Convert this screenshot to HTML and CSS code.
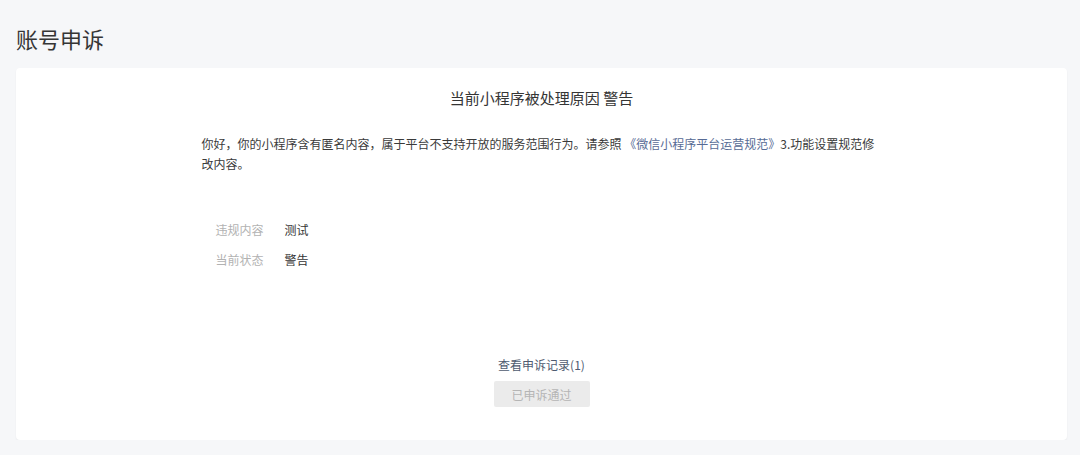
FILE: index.html
```html
<!DOCTYPE html>
<html lang="zh-CN">

<head>
  <meta charset="UTF-8">
  <meta name="viewport" content="width=device-width, initial-scale=1.0">
  <title>账号申诉</title>
  <link rel="stylesheet" href="styles.css">
</head>

<body>
  <div class="page">
    <h1 class="page-title">账号申诉</h1>

    <div class="appeal-card">
      <h2 class="appeal-reason">当前小程序被处理原因 警告</h2>

      <div class="appeal-content">
        <p class="appeal-desc">你好，你的小程序含有匿名内容，属于平台不支持开放的服务范围行为。请参照 <a href="#" class="link">《微信小程序平台运营规范》</a>3.功能设置规范修改内容。</p>

        <div class="info-list">
          <div class="info-row">
            <span class="info-label">违规内容</span>
            <span class="info-value">测试</span>
          </div>
          <div class="info-row">
            <span class="info-label">当前状态</span>
            <span class="info-value">警告</span>
          </div>
        </div>
      </div>

      <!-- Appeal actions -->
      <div class="appeal-actions">
        <a href="#" class="record-link">查看申诉记录(1)</a>
        <button class="btn-disabled" disabled>已申诉通过</button>
      </div>
    </div>
  </div>
</body>

</html>
```

FILE: styles.css
```css
/* General body styling */
body {
  margin: 0;
  padding: 0;
  background-color: #f6f7f9;
  font-family: "Noto Sans CJK SC", "Noto Sans", sans-serif;
  color: #353535;
}

.page {
  padding: 23px 13px 0 16px;
}

.page-title {
  margin: 0;
  font-size: 22px;
  font-weight: normal;
  line-height: 30px;
}

/* Card */
.appeal-card {
  margin-top: 15px;
  background-color: #fff;
  border-radius: 4px;
  box-shadow: 0 1px 2px rgba(0, 0, 0, 0.06);
  padding: 20px 0 33px;
}

.appeal-reason {
  margin: 0;
  font-size: 15px;
  font-weight: normal;
  line-height: 20px;
  text-align: center;
}

.appeal-content {
  width: 680px;
  margin: 26px auto 0;
}

.appeal-desc {
  margin: 0;
  font-size: 12px;
  line-height: 20px;
  color: #3a3a3a;
}

.link {
  color: #576b95;
  text-decoration: none;
}

/* Info rows */
.info-list {
  display: flex;
  flex-direction: column;
  gap: 10px;
  margin-top: 46px;
  padding-left: 14px;
}

.info-row {
  display: flex;
  font-size: 12px;
  line-height: 20px;
}

.info-label {
  width: 69px;
  color: #b2b2b2;
}

.info-value {
  color: #353535;
}

/* Actions */
.appeal-actions {
  display: flex;
  flex-direction: column;
  align-items: center;
  margin-top: 85px;
}

.record-link {
  font-size: 12px;
  line-height: 20px;
  color: #4f5b70;
  text-decoration: none;
}

.btn-disabled {
  margin-top: 6px;
  width: 96px;
  height: 26px;
  border: none;
  border-radius: 2px;
  background-color: #ebebeb;
  color: #b5b5b5;
  font-family: inherit;
  font-size: 12px;
  cursor: default;
}
```
